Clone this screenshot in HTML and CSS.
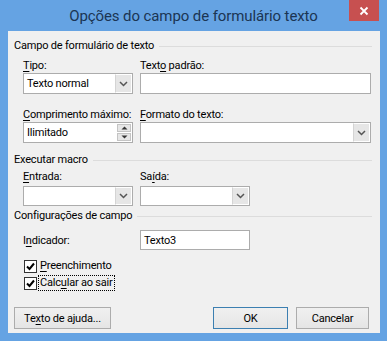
FILE: index.html
```html
<!DOCTYPE html>
<html lang="pt">
<head>
<meta charset="utf-8">
<title>Opções do campo de formulário texto</title>
<link rel="stylesheet" href="styles.css">
</head>
<body>
<div class="window">
  <div class="titlebar">
    <div class="tb-left"></div>
    <div class="title">Opções do campo de formulário texto</div>
    <div class="close">
      <svg width="10" height="10" viewBox="0 0 10 10"><path d="M1.5 1.5 L8.5 8.5 M8.5 1.5 L1.5 8.5" stroke="#fff" stroke-width="1.8" fill="none"/></svg>
    </div>
  </div>
  <div class="client">
    <div class="group-header"><span>Campo de formulário de texto</span></div>

    <div class="grid r1">
      <div class="lbl"><u>T</u>ipo:</div>
      <div class="lbl">Text<u>o</u> padrão:</div>
      <div class="ctl"><span class="val">Texto normal</span><span class="drop"><svg width="9" height="6" viewBox="0 0 9 6"><path d="M1 1 L4.5 4.5 L8 1" stroke="#555" stroke-width="1.5" fill="none"/></svg></span></div>
      <div class="ctl"><span class="val"></span></div>
    </div>

    <div class="grid r2">
      <div class="lbl"><u>C</u>omprimento máximo:</div>
      <div class="lbl"><u>F</u>ormato do texto:</div>
      <div class="ctl"><span class="val">Ilimitado</span>
        <span class="spin">
          <span class="spin-btn"><svg width="7" height="4" viewBox="0 0 7 4"><path d="M0.5 3.5 L3.5 0.5 L6.5 3.5 Z" fill="#333"/></svg></span>
          <span class="spin-btn"><svg width="7" height="4" viewBox="0 0 7 4"><path d="M0.5 0.5 L3.5 3.5 L6.5 0.5 Z" fill="#333"/></svg></span>
        </span>
      </div>
      <div class="ctl"><span class="val"></span><span class="drop"><svg width="9" height="6" viewBox="0 0 9 6"><path d="M1 1 L4.5 4.5 L8 1" stroke="#555" stroke-width="1.5" fill="none"/></svg></span></div>
    </div>

    <div class="group-header h2"><span>Executar macro</span></div>

    <div class="grid narrow r3">
      <div class="lbl"><u>E</u>ntrada:</div>
      <div class="lbl">Sa<u>í</u>da:</div>
      <div class="ctl"><span class="val"></span><span class="drop"><svg width="9" height="6" viewBox="0 0 9 6"><path d="M1 1 L4.5 4.5 L8 1" stroke="#555" stroke-width="1.5" fill="none"/></svg></span></div>
      <div class="ctl"><span class="val"></span><span class="drop"><svg width="9" height="6" viewBox="0 0 9 6"><path d="M1 1 L4.5 4.5 L8 1" stroke="#555" stroke-width="1.5" fill="none"/></svg></span></div>
    </div>

    <div class="group-header h3"><span>Configurações de campo</span></div>

    <div class="grid narrow r4">
      <div class="lbl">I<u>n</u>dicador:</div>
      <div class="ctl edit"><span class="val">Texto3</span></div>
    </div>

    <div class="check c1">
      <span class="box"><svg width="11" height="11" viewBox="0 0 11 11"><path d="M2 5.5 L4.5 8 L9 2.5" stroke="#000" stroke-width="2" fill="none"/></svg></span>
      <span class="clabel"><u>P</u>reenchimento</span>
    </div>
    <div class="check c2">
      <span class="box"><svg width="11" height="11" viewBox="0 0 11 11"><path d="M2 5.5 L4.5 8 L9 2.5" stroke="#000" stroke-width="2" fill="none"/></svg></span>
      <span class="clabel focus">Calc<u>u</u>lar ao sair</span>
    </div>

    <div class="buttons">
      <div class="btn help">Te<u>x</u>to de ajuda...</div>
      <div class="btn ok">OK</div>
      <div class="btn cancel">Cancelar</div>
    </div>
  </div>
</div>
</body>
</html>
```

FILE: styles.css
```css
* { box-sizing: border-box; }
html, body { margin: 0; padding: 0; }
body {
  width: 387px;
  height: 341px;
  overflow: hidden;
  font-family: Roboto, "Noto Sans", sans-serif;
  font-size: 11px;
  letter-spacing: -0.2px;
  color: #000;
}
u { text-decoration: underline; text-underline-offset: 2px; }

.window {
  width: 387px;
  height: 341px;
  background: #65a3e3;
  display: flex;
  flex-direction: column;
}
.titlebar {
  height: 31px;
  flex: none;
  display: grid;
  grid-template-columns: 1fr auto 1fr;
  align-items: center;
  padding: 0 8px;
}
.title {
  font-size: 15px;
  letter-spacing: -0.1px;
  color: #1b3553;
  white-space: nowrap;
  line-height: 20px;
  padding-top: 1px;
}
.close {
  justify-self: end;
  align-self: start;
  width: 30px;
  height: 21px;
  background: #c75050;
  display: flex;
  align-items: center;
  justify-content: center;
}

.client {
  flex: 1;
  margin: 0 7px 8px 8px;
  background: #f0f0f0;
  padding: 7px 8px 4px 6px;
  display: flex;
  flex-direction: column;
}

.group-header {
  display: flex;
  align-items: center;
  height: 16px;
  line-height: 16px;
  white-space: nowrap;
}
.group-header::after {
  content: "";
  flex: 1;
  height: 1px;
  background: #dcdcdc;
  margin-left: 5px;
}
.group-header.h2 { margin-top: 9px; }
.group-header.h3 { margin-top: 2px; }

.grid {
  display: grid;
  grid-template-columns: 110px 231px;
  column-gap: 7px;
  padding-left: 9px;
}
.grid.narrow { grid-template-columns: 110px 110px; }
.grid.r1 { margin-top: 4px; }
.grid.r2 { margin-top: 13px; }
.grid.r3 { margin-top: 1px; row-gap: 2px; }
.grid.r4 { margin-top: 6px; align-items: center; }

.lbl {
  height: 15px;
  line-height: 15px;
  white-space: nowrap;
}
.ctl {
  height: 21px;
  background: #fff;
  border: 1px solid #acacac;
  display: flex;
  align-items: stretch;
}
.r3 .ctl, .ctl.edit { height: 20px; }
.val {
  flex: 1;
  padding-left: 3px;
  display: flex;
  align-items: center;
  white-space: nowrap;
}
.drop {
  width: 17px;
  background: #e6e6e6;
  border: 1px solid #fff;
  border-left: 1px solid #d4d4d4;
  display: flex;
  align-items: center;
  justify-content: center;
}
.spin {
  width: 14px;
  margin: 1px;
  display: flex;
  flex-direction: column;
  gap: 1px;
}
.spin-btn {
  flex: 1;
  background: #e6e6e6;
  border: 1px solid #c4c4c4;
  display: flex;
  align-items: center;
  justify-content: center;
}

.check {
  display: flex;
  align-items: center;
  height: 16px;
  padding-left: 10px;
}
.check.c1 { margin-top: 8px; }
.check.c2 { margin-top: 1px; }
.box {
  width: 13px;
  height: 13px;
  border: 1px solid #333;
  background: #fff;
  display: flex;
  align-items: center;
  justify-content: center;
}
.clabel {
  margin-left: 2px;
  padding: 0 1px;
  line-height: 14px;
  white-space: nowrap;
}
.clabel.focus { outline: 1px dotted #000; outline-offset: 0; }

.buttons {
  margin-top: auto;
  display: flex;
  gap: 8px;
  padding-right: 3px;
}
.btn {
  height: 22px;
  border: 1px solid #acacac;
  background: linear-gradient(#f0f0f0, #e5e5e5);
  display: flex;
  align-items: center;
  justify-content: center;
  white-space: nowrap;
}
.btn.help { width: 97px; }
.btn.ok { width: 75px; margin-left: auto; border-color: #3c7fb1; }
.btn.cancel { width: 73px; }
```
